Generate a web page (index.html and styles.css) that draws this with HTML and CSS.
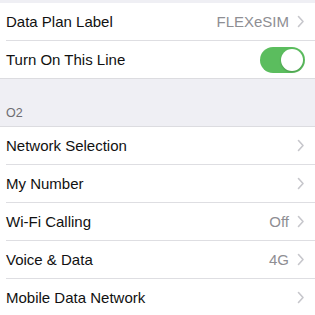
FILE: index.html
```html
<!DOCTYPE html>
<html>
<head>
<meta charset="utf-8">
<link rel="stylesheet" href="styles.css">
</head>
<body>
<div class="page">
  <div class="gap-top"></div>
  <div class="group">
    <div class="row">
      <span class="label">Data Plan Label</span>
      <span class="value">FLEXeSIM</span>
      <svg class="chev" viewBox="0 0 8 13" width="8" height="13"><path d="M1.5 1.5 L6 6.5 L1.5 11.5" fill="none" stroke="#c7c7cc" stroke-width="1.6" stroke-linecap="round" stroke-linejoin="round"/></svg>
    </div>
    <div class="row last">
      <span class="label">Turn On This Line</span>
      <span class="toggle"><span class="knob"></span></span>
    </div>
  </div>
  <div class="header">O2</div>
  <div class="group top">
    <div class="row">
      <span class="label">Network Selection</span>
      <svg class="chev" viewBox="0 0 8 13" width="8" height="13"><path d="M1.5 1.5 L6 6.5 L1.5 11.5" fill="none" stroke="#c7c7cc" stroke-width="1.6" stroke-linecap="round" stroke-linejoin="round"/></svg>
    </div>
    <div class="row">
      <span class="label">My Number</span>
      <svg class="chev" viewBox="0 0 8 13" width="8" height="13"><path d="M1.5 1.5 L6 6.5 L1.5 11.5" fill="none" stroke="#c7c7cc" stroke-width="1.6" stroke-linecap="round" stroke-linejoin="round"/></svg>
    </div>
    <div class="row">
      <span class="label">Wi-Fi Calling</span>
      <span class="value">Off</span>
      <svg class="chev" viewBox="0 0 8 13" width="8" height="13"><path d="M1.5 1.5 L6 6.5 L1.5 11.5" fill="none" stroke="#c7c7cc" stroke-width="1.6" stroke-linecap="round" stroke-linejoin="round"/></svg>
    </div>
    <div class="row">
      <span class="label">Voice &amp; Data</span>
      <span class="value">4G</span>
      <svg class="chev" viewBox="0 0 8 13" width="8" height="13"><path d="M1.5 1.5 L6 6.5 L1.5 11.5" fill="none" stroke="#c7c7cc" stroke-width="1.6" stroke-linecap="round" stroke-linejoin="round"/></svg>
    </div>
    <div class="row">
      <span class="label">Mobile Data Network</span>
      <svg class="chev" viewBox="0 0 8 13" width="8" height="13"><path d="M1.5 1.5 L6 6.5 L1.5 11.5" fill="none" stroke="#c7c7cc" stroke-width="1.6" stroke-linecap="round" stroke-linejoin="round"/></svg>
    </div>
  </div>
</div>
</body>
</html>
```
FILE: styles.css
```css
html, body {
  margin: 0;
  padding: 0;
  background: #efeff4;
}
.page {
  width: 315px;
  height: 315px;
  overflow: hidden;
  font-family: "Liberation Sans", Arial, sans-serif;
}
.gap-top {
  height: 3px;
}
.group {
  background: #fff;
  padding-left: 6px;
  border-bottom: 1px solid #dcdce0;
}
.group.top {
  border-top: 1px solid #dcdce0;
  border-bottom: none;
}
.row {
  height: 37px;
  display: flex;
  align-items: center;
  padding-right: 10px;
  border-bottom: 1px solid #dedee2;
}
.row.last {
  border-bottom: none;
}
.label {
  flex: 1;
  font-size: 15px;
  color: #111;
}
.value {
  font-size: 15px;
  color: #8e8e93;
}
.chev {
  margin-left: 8px;
  display: block;
}
.toggle {
  width: 45px;
  height: 26px;
  border-radius: 13px;
  background: #5bbd5e;
  display: flex;
  align-items: center;
  justify-content: flex-end;
  padding: 0 2px;
  box-sizing: border-box;
}
.knob {
  width: 22px;
  height: 22px;
  border-radius: 50%;
  background: #fff;
  box-shadow: 0 1px 2px rgba(0,0,0,0.2);
}
.header {
  height: 47px;
  box-sizing: border-box;
  padding: 0 0 0 6px;
  display: flex;
  align-items: flex-end;
  padding-bottom: 6px;
  font-size: 12.5px;
  color: #6d6d72;
}
```
